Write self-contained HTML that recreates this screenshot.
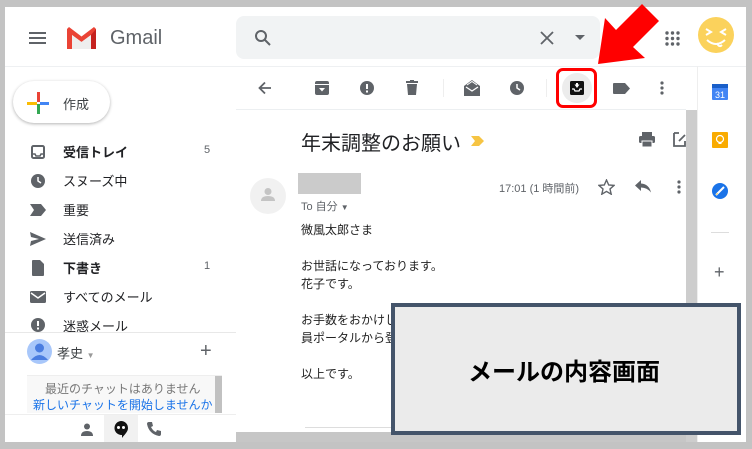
<!DOCTYPE html>
<html><head><meta charset="utf-8"><style>
*{margin:0;padding:0;box-sizing:border-box}
body{width:752px;height:449px;background:#c3c3c3;position:relative;overflow:hidden;font-family:"Liberation Sans","Noto Sans CJK JP",sans-serif;color:#202124}
.a{position:absolute}
.app{left:5px;top:7px;width:741px;height:435px;background:#fff;overflow:hidden}
.t{position:absolute;white-space:nowrap}
.side .t{font-size:13px;color:#202124}
</style></head><body>
<div class="a app"></div>
<div class="a" style="left:5px;top:66px;width:741px;height:1px;background:#eef0f2"></div>
<svg class="a" style="left:29px;top:31px" width="18" height="14"><rect y="1" width="17" height="2" fill="#5f6368"/><rect y="6" width="17" height="2" fill="#5f6368"/><rect y="11" width="17" height="2" fill="#5f6368"/></svg>
<svg class="a" style="left:65px;top:26px" width="33" height="24" viewBox="0 0 33 24"><path d="M2 3v20h5V9l9.5 7L26 9v14h5V3l-2-2-12.5 9.5L4 1z" fill="#ea4335"/><path d="M7 9l9.5 7L26 9v14H7z" fill="#eee"/><path d="M26 9v14h5V3z" fill="#c5221f"/></svg>
<div class="t" style="left:110px;top:27px;font-size:20px;color:#5f6368">Gmail</div>
<div class="a" style="left:236px;top:16px;width:364px;height:43px;background:#f1f3f4;border-radius:8px"></div>
<svg class="a" style="left:254px;top:29px" width="18" height="18"><circle cx="7" cy="7" r="5" fill="none" stroke="#5f6368" stroke-width="2"/><path d="M11 11l5 5" stroke="#5f6368" stroke-width="2"/></svg>
<svg class="a" style="left:540px;top:31px" width="14" height="14"><path d="M1 1l12 12M13 1L1 13" stroke="#5f6368" stroke-width="1.8"/></svg>
<svg class="a" style="left:575px;top:35px" width="10" height="6"><path d="M0 0h10L5 5z" fill="#5f6368"/></svg>
<svg class="a" style="left:665px;top:31px" width="16" height="16" fill="#5f6368"><circle cx="2" cy="2" r="1.7"/><circle cx="7.5" cy="2" r="1.7"/><circle cx="13" cy="2" r="1.7"/><circle cx="2" cy="7.5" r="1.7"/><circle cx="7.5" cy="7.5" r="1.7"/><circle cx="13" cy="7.5" r="1.7"/><circle cx="2" cy="13" r="1.7"/><circle cx="7.5" cy="13" r="1.7"/><circle cx="13" cy="13" r="1.7"/></svg>
<svg class="a" style="left:697px;top:16px" width="40" height="40"><circle cx="19" cy="19" r="18" fill="#fbd25c"/><path d="M9 13l5 3-5 3M29 13l-5 3 5 3" stroke="#fff" stroke-width="2" fill="none"/><path d="M10 24q9 8 18 0" stroke="#fff" stroke-width="2" fill="none"/><path d="M20 27q2 5 5 2" stroke="#fff" stroke-width="2" fill="none"/></svg>
<div class="a" style="left:13px;top:81px;width:97px;height:42px;border-radius:21px;background:#fff;box-shadow:0 1px 3px rgba(0,0,0,.3)"></div>
<svg class="a" style="left:27px;top:92px" width="22" height="22"><rect x="10" y="0" width="3" height="10" fill="#ea4335"/><rect x="10" y="12" width="3" height="10" fill="#34a853"/><rect x="0" y="10" width="10" height="3" fill="#fbbc04"/><rect x="13" y="10" width="9" height="3" fill="#4285f4"/></svg>
<div class="t" style="left:63px;top:94px;font-size:13px;color:#3c4043">作成</div>
<div class="side">
<svg class="a" style="left:31px;top:145px" width="14" height="14"><rect x="1" y="1" width="12" height="12" rx="1.5" fill="none" stroke="#5f6368" stroke-width="2"/><path d="M1 9h3l1 2h4l1-2h3" stroke="#5f6368" stroke-width="1.5" fill="none"/></svg>
<div class="t" style="left:63px;top:142px;font-weight:bold">受信トレイ</div><div class="t" style="left:204px;top:144px;font-size:11px;color:#5f6368">5</div>
<svg class="a" style="left:31px;top:174px" width="14" height="14"><circle cx="7" cy="7" r="7" fill="#5f6368"/><path d="M7 3v4l3 2" stroke="#fff" stroke-width="1.5" fill="none"/></svg>
<div class="t" style="left:63px;top:171px">スヌーズ中</div>
<svg class="a" style="left:30px;top:204px" width="16" height="12"><path d="M0 0h11l5 6-5 6H0l4-6z" fill="#5f6368"/></svg>
<div class="t" style="left:63px;top:200px">重要</div>
<svg class="a" style="left:30px;top:232px" width="16" height="14"><path d="M0 0l16 7-16 7 1-5 8-2-8-2z" fill="#5f6368"/></svg>
<div class="t" style="left:63px;top:229px">送信済み</div>
<svg class="a" style="left:32px;top:260px" width="12" height="16"><path d="M0 1q0-1 1-1h7l4 4v11q0 1-1 1H1q-1 0-1-1z" fill="#5f6368"/></svg>
<div class="t" style="left:63px;top:258px;font-weight:bold">下書き</div><div class="t" style="left:204px;top:260px;font-size:11px;color:#5f6368">1</div>
<svg class="a" style="left:30px;top:291px" width="16" height="12"><rect width="16" height="12" rx="1.5" fill="#5f6368"/><path d="M1 2l7 5 7-5" stroke="#fff" stroke-width="1.5" fill="none"/></svg>
<div class="t" style="left:63px;top:287px">すべてのメール</div>
<svg class="a" style="left:31px;top:318px" width="14" height="14"><circle cx="7" cy="7" r="7" fill="#5f6368"/><rect x="6" y="3" width="2" height="5" fill="#fff"/><rect x="6" y="9.5" width="2" height="2" fill="#fff"/></svg>
<div class="t" style="left:63px;top:316px">迷惑メール</div>
</div>
<div class="a" style="left:5px;top:332px;width:231px;height:110px;background:#fff;border-top:1px solid #e8e8e8"></div>
<svg class="a" style="left:27px;top:339px" width="25" height="25"><circle cx="12.5" cy="12.5" r="12.5" fill="#a8c7fa"/><circle cx="12.5" cy="9" r="4.5" fill="#4a7de0"/><path d="M4 21q8.5-10 17 0" fill="#4a7de0"/></svg>
<div class="t" style="left:57px;top:343px;font-size:13px;color:#3c4043">孝史 <span style="font-size:8px;color:#999">▼</span></div>
<div class="t" style="left:200px;top:340px;font-size:20px;color:#5f6368">+</div>
<div class="a" style="left:27px;top:375px;width:195px;height:38px;background:#f8f8f8;border-top:1px solid #eee"></div>
<div class="a" style="left:215px;top:376px;width:7px;height:37px;background:#c1c1c1"></div>
<div class="t" style="left:45px;top:380px;font-size:12px;color:#777">最近のチャットはありません</div>
<div class="t" style="left:33px;top:396px;font-size:12px;color:#1a73e8">新しいチャットを開始しませんか</div>
<div class="a" style="left:5px;top:414px;width:231px;height:1px;background:#eee"></div>
<div class="a" style="left:104px;top:415px;width:34px;height:27px;background:#f1f1f1"></div>
<svg class="a" style="left:81px;top:423px" width="12" height="13"><circle cx="6" cy="3.5" r="3" fill="#5f6368"/><path d="M0 13q0-5 6-5t6 5z" fill="#5f6368"/></svg>
<svg class="a" style="left:114px;top:421px" width="14" height="17"><path d="M7 0a7 7 0 0 1 7 7c0 4-4 7-6 10v-3A7 7 0 0 1 7 0z" fill="#111"/><circle cx="4.5" cy="6.5" r="1.5" fill="#fff"/><circle cx="9.5" cy="6.5" r="1.5" fill="#fff"/></svg>
<svg class="a" style="left:147px;top:422px" width="14" height="14"><path d="M2 0l3 0 1 4-2 1q2 4 5 5l1-2 4 1v3q0 2-2 2Q2 12 0 2q0-2 2-2z" fill="#5f6368"/></svg>
<div class="a" style="left:236px;top:109px;width:450px;height:1px;background:#eceff1"></div>
<svg class="a" style="left:258px;top:81px" width="14" height="14"><path d="M13 7H2M7 1.5L1.5 7 7 12.5" stroke="#5f6368" stroke-width="1.8" fill="none"/></svg>
<svg class="a" style="left:315px;top:81px" width="14" height="14"><rect width="14" height="14" rx="2" fill="#5f6368"/><rect x="0" y="3" width="14" height="1" fill="#fff"/><path d="M4 7h6l-3 3.5z" fill="#fff"/></svg>
<svg class="a" style="left:360px;top:81px" width="14" height="14"><circle cx="7" cy="7" r="7" fill="#5f6368"/><rect x="6" y="3" width="2" height="5" fill="#fff"/><rect x="6" y="9.5" width="2" height="2" fill="#fff"/></svg>
<svg class="a" style="left:406px;top:80px" width="12" height="15"><rect x="0" y="1" width="12" height="2" fill="#5f6368"/><rect x="4" y="0" width="4" height="2" fill="#5f6368"/><path d="M1 4h10l-1 11H2z" fill="#5f6368"/></svg>
<div class="a" style="left:443px;top:79px;width:1px;height:18px;background:#eee"></div>
<svg class="a" style="left:464px;top:80px" width="16" height="16"><path d="M0 6l8-6 8 6v10H0z" fill="#5f6368"/><path d="M2 7l6 4 6-4" stroke="#fff" stroke-width="1.3" fill="none"/><path d="M3 5l5-3.5L13 5" stroke="#fff" stroke-width="1" fill="none"/></svg>
<svg class="a" style="left:510px;top:81px" width="14" height="14"><circle cx="7" cy="7" r="7" fill="#5f6368"/><path d="M7 3v4l3 2" stroke="#fff" stroke-width="1.5" fill="none"/></svg>
<div class="a" style="left:546px;top:79px;width:1px;height:18px;background:#eee"></div>
<div class="a" style="left:556px;top:68px;width:41px;height:40px;border:3px solid #f00;border-radius:7px;background:#fff"></div>
<div class="a" style="left:562px;top:73px;width:30px;height:30px;border-radius:50%;background:#ececec"></div>
<svg class="a" style="left:570px;top:81px" width="14" height="14"><rect width="14" height="14" rx="1.5" fill="#111"/><path d="M2 8h2l1 2h4l1-2h2" stroke="#fff" stroke-width="1.3" fill="none"/><path d="M4.5 3.5h5L7 7z" fill="#fff"/><rect x="6" y="2" width="2" height="2" fill="#fff"/></svg>
<svg class="a" style="left:613px;top:83px" width="17" height="11"><path d="M0 1q0-1 1-1h11l5 5.5-5 5.5H1q-1 0-1-1z" fill="#5f6368"/></svg>
<svg class="a" style="left:660px;top:81px" width="4" height="14" fill="#5f6368"><circle cx="2" cy="2" r="1.6"/><circle cx="2" cy="7" r="1.6"/><circle cx="2" cy="12" r="1.6"/></svg>
<div class="a" style="left:686px;top:110px;width:11px;height:332px;background:#cdcdcd"></div>
<div class="a" style="left:697px;top:66px;width:1px;height:376px;background:#eee"></div>
<svg class="a" style="left:712px;top:84px" width="16" height="16"><rect width="16" height="16" rx="1" fill="#4285f4"/><rect width="16" height="4" fill="#1a5fc9"/><text x="8" y="14" font-size="9" fill="#fff" text-anchor="middle" font-family="Liberation Sans">31</text></svg>
<svg class="a" style="left:712px;top:132px" width="16" height="16"><rect width="16" height="16" rx="1" fill="#f9ab00"/><circle cx="8" cy="7" r="3.5" fill="none" stroke="#fff" stroke-width="1.2"/><rect x="6.5" y="10" width="3" height="2" fill="#fff"/></svg>
<svg class="a" style="left:712px;top:183px" width="16" height="16"><circle cx="8" cy="8" r="8" fill="#1a73e8"/><path d="M4 12l8-8" stroke="#fff" stroke-width="2"/><path d="M4 12l2-1-1-1z" fill="#fbbc04"/></svg>
<div class="a" style="left:711px;top:232px;width:18px;height:1px;background:#ddd"></div>
<div class="t" style="left:714px;top:262px;font-size:18px;color:#5f6368">+</div>
<div class="t" style="left:301px;top:127px;font-size:20px;color:#202124">年末調整のお願い</div>
<svg class="a" style="left:471px;top:136px" width="13" height="10"><path d="M0 0h8l5 5-5 5H0l4-5z" fill="#f6c443"/></svg>
<svg class="a" style="left:639px;top:132px" width="16" height="15"><rect x="3" y="0" width="10" height="4" fill="#5f6368"/><rect x="0" y="4" width="16" height="7" rx="1.5" fill="#5f6368"/><rect x="3" y="9" width="10" height="6" fill="#5f6368" stroke="#fff" stroke-width="1"/></svg>
<svg class="a" style="left:673px;top:132px" width="13" height="15"><path d="M1 1h5M1 1v13h11V9" stroke="#5f6368" stroke-width="1.8" fill="none"/><path d="M6 9l6-6" stroke="#5f6368" stroke-width="1.8"/></svg>
<div class="a" style="left:250px;top:178px;width:36px;height:36px;border-radius:50%;background:#f1f1f1"></div>
<svg class="a" style="left:261px;top:187px" width="14" height="16"><circle cx="7" cy="4.5" r="3.5" fill="#c4c4c4"/><path d="M0 14q0-5 7-5t7 5z" fill="#c4c4c4"/></svg>
<div class="a" style="left:298px;top:173px;width:63px;height:21px;background:#cbcbcb"></div>
<div class="t" style="left:301px;top:198px;font-size:11px;color:#5f6368">To 自分 <span style="font-size:8px">▼</span></div>
<div class="t" style="left:499px;top:180px;font-size:11px;color:#5f6368">17:01 (1 時間前)</div>
<svg class="a" style="left:598px;top:179px" width="17" height="16"><path d="M8.5 1l2.2 5 5.3.4-4 3.6 1.2 5.2-4.7-2.8-4.7 2.8 1.2-5.2-4-3.6 5.3-.4z" fill="none" stroke="#5f6368" stroke-width="1.4"/></svg>
<svg class="a" style="left:635px;top:180px" width="16" height="13"><path d="M6 0L0 5.5 6 11V7.5q6 0 10 5Q14 4 6 3.5z" fill="#5f6368"/></svg>
<svg class="a" style="left:677px;top:180px" width="4" height="14" fill="#5f6368"><circle cx="2" cy="2" r="1.6"/><circle cx="2" cy="7" r="1.6"/><circle cx="2" cy="12" r="1.6"/></svg>
<div style="position:absolute;left:301px;top:221px;font-size:12px;line-height:18px;color:#222">
<div>微風太郎さま</div><div>&nbsp;</div><div>お世話になっております。</div><div>花子です。</div><div>&nbsp;</div><div>お手数をおかけします</div><div>員ポータルから登録</div><div>&nbsp;</div><div>以上です。</div></div>
<div class="a" style="left:305px;top:427px;width:381px;height:1px;background:#ddd"></div>
<div class="a" style="left:236px;top:432px;width:450px;height:10px;background:#c6c6c6"></div>
<div class="a" style="left:391px;top:303px;width:350px;height:132px;background:#ebebeb;border:4px solid #44546a;display:flex;align-items:center;justify-content:center;font-size:24px;font-weight:bold;color:#000;padding-right:4px">メールの内容画面</div>
<div class="a" style="left:0;top:0;width:752px;height:7px;background:#c3c3c3"></div>
<div class="a" style="left:0;top:0;width:5px;height:449px;background:#c3c3c3"></div>
<div class="a" style="left:746px;top:0;width:6px;height:449px;background:#c3c3c3"></div>
<div class="a" style="left:0;top:442px;width:752px;height:7px;background:#c3c3c3"></div>
<svg class="a" style="left:596px;top:0px" width="90" height="70"><path d="M2 64L9 18L20 30L46 4L63 21L37 47L49 58Z" fill="#ff0000"/></svg>
</body></html>
